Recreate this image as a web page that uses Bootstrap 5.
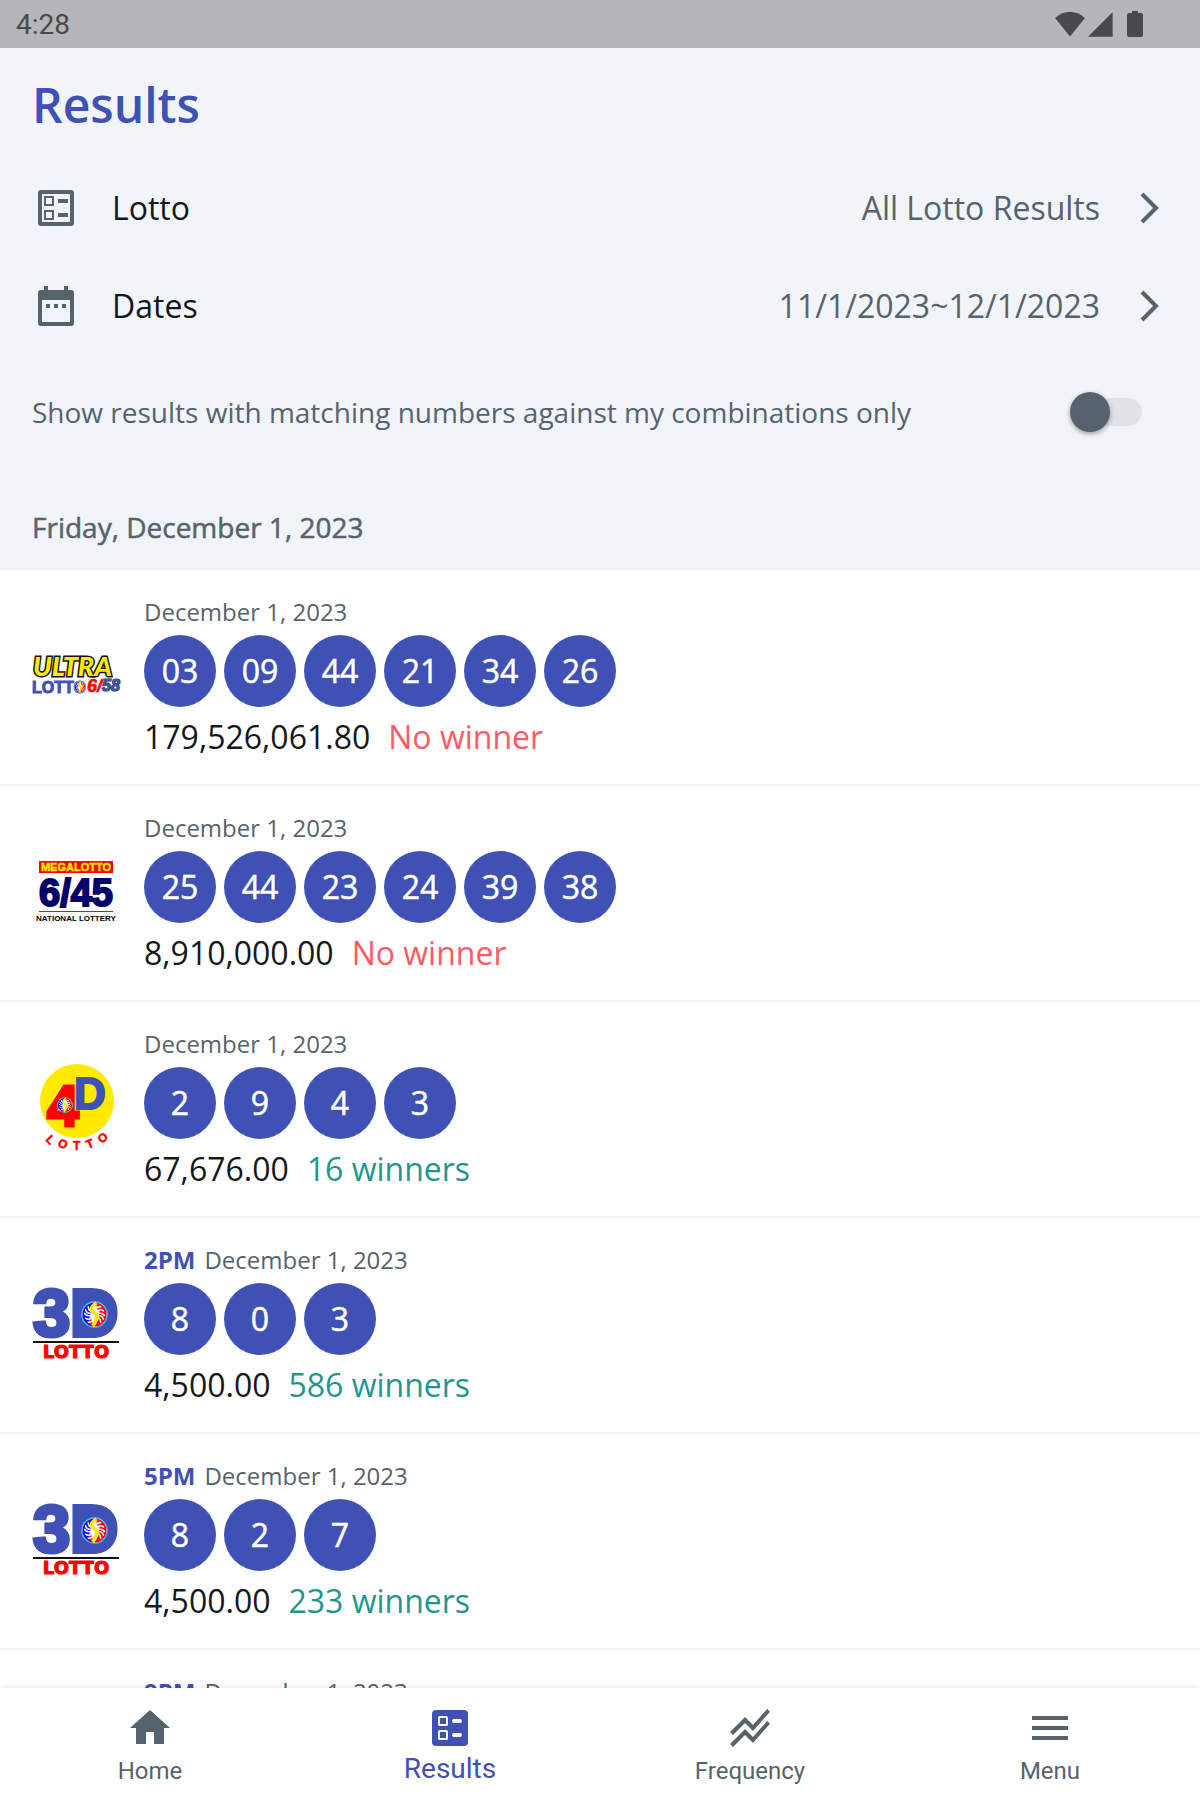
<!DOCTYPE html>
<html lang="en">
<head>
<meta charset="utf-8">
<meta name="viewport" content="width=device-width, initial-scale=1">
<title>Lotto Results</title>
<link href="https://cdn.jsdelivr.net/npm/bootstrap@5.3.0/dist/css/bootstrap.min.css" rel="stylesheet">
<style>
  :root { --ink: #14181b; --muted: #57636c; --brand: #3f51b5; --panel: #f1f4f8; --win: #249689; --lose: #ff5963; }
  body { font-family: "Open Sans", "Noto Sans", sans-serif; color: var(--ink); background: #fff; font-size: 32px; line-height: 48px; }
  .muted { color: var(--muted); }
  .brand { color: var(--brand); }
  .panel { background: var(--panel); }
  .status-bar { height: 48px; padding: 0 57px 0 16px; background: #b5b6ba; color: #48494a; font: 28px/50px Roboto, sans-serif; }
  .page-title { font-size: 48px; line-height: 64px; font-weight: 600; padding: 25px 32px 22px; }
  .filter-row { height: 98px; padding: 0 28px 0 32px; gap: 32px; color: var(--ink); font-size: 32px; line-height: 48px; }
  .filter-row svg { width: 48px; height: 48px; fill: var(--muted); }
  .filter-row .value { margin-right: -8px; }
  .match-row { height: 114px; padding: 0 58px 0 32px; font-size: 28px; line-height: 40px; }
  .toggle { appearance: none; width: 72px; height: 28px; margin: 0; border: 0; border-radius: 14px; background: #dfe2e6; position: relative; }
  .toggle::before { content: ""; position: absolute; left: 0; top: -6px; width: 40px; height: 40px; border-radius: 50%; background: var(--muted); box-shadow: 0 2px 5px rgba(0,0,0,.35); }
  .toggle:checked::before { left: 32px; background: var(--brand); }
  .day-heading { font-size: 28px; line-height: 40px; font-weight: 500; margin: 0; padding: 38px 32px 23px; -webkit-text-stroke: .5px currentColor; }
  .feed { min-height: 0; scrollbar-width: none; }
  .draw { padding: 24px 32px 23px; gap: 24px; border-bottom: 2px solid var(--panel); }
  .draw-logo { width: 88px; height: 88px; }
  .draw-date { font-size: 24px; line-height: 36px; gap: 9px; margin-bottom: 5px; }
  .ball { width: 72px; height: 72px; border-radius: 50%; background: var(--brand); color: #fff; font-weight: 500; -webkit-text-stroke: .5px currentColor; }
  .prize { gap: 18px; margin-top: 6px; }
  .win { color: var(--win); }
  .lose { color: var(--lose); }
  .tab-bar { height: 112px; background: #fff; box-shadow: 0 0 8px rgba(0,0,0,.12); font-family: Roboto, sans-serif; z-index: 2; }
  .tab-bar a { color: var(--muted); font-size: 24px; line-height: 32px; padding-top: 16px; gap: 3px; }
  .tab-bar a.current { color: var(--brand); font-size: 28px; gap: 1px; }
  .tab-bar svg { width: 48px; height: 48px; fill: currentColor; }
  .logo-sans { font-family: "Liberation Sans", sans-serif; font-weight: 700; }
  .logo-heavy { font-family: Lato, "Liberation Sans", sans-serif; font-weight: 900; }
  .logo-wide { font-family: "DejaVu Sans", sans-serif; font-weight: 700; }
</style>
<script src="https://cdn.jsdelivr.net/npm/bootstrap@5.3.0/dist/js/bootstrap.bundle.min.js"></script>
</head>
<body class="vh-100 d-flex flex-column overflow-hidden">

<svg width="0" height="0" class="position-absolute" aria-hidden="true">
  <symbol id="swirl" viewBox="-13 -13 26 26">
    <circle r="12.3" fill="#fff" stroke="#25b7e8" stroke-width="1.2"/>
    <path d="M0-11.6A11.6 11.6 0 0 0 0 11.6Q-7 8-4 1Q-2-4 0-11.6Z" fill="#0a10e8"/>
    <path d="M0-11.6A11.6 11.6 0 0 1 0 11.6Q2 5 4 0Q7-7 0-11.6Z" fill="#f40b0b"/>
    <path d="M-3 2Q-3 8 0 11.500H-2Q-8 8-3 2ZM3-2Q3-8 0-11.500H2Q8-8 3-2Z" fill="#f40b0b"/>
    <g fill="none" stroke="#fff" stroke-width="1.500" stroke-linecap="round">
      <path d="M-3-3Q-6-4-6-7.500M-3-1Q-8-1-8.500-4.500M-3 1Q-8 2-9.500-1M-2 3Q-6 6-8.500 3.500M0 4Q-3 8-6 7.500"/>
      <path d="M3 3Q6 4 6 7.500M3 1Q8 1 8.500 4.500M3-1Q8-2 9.500 1M2-3Q6-6 8.500-3.500M0-4Q3-8 6-7.500"/>
    </g>
    <path d="M2-11Q-5-7-2-3Q4 0 2 4Q1 8-2 11" fill="none" stroke="#ffe800" stroke-width="3.600"/>
  </symbol>
  <symbol id="logo-3d" viewBox="0 0 88 88">
    <g class="logo-sans" fill="#3f51b5" stroke="#3f51b5" stroke-width="4" font-size="67">
      <text x="1" y="54">3</text>
      <text x="38" y="54">D</text>
    </g>
    <rect x="47" y="12" width="33" height="40" rx="12" fill="#3f51b5"/>
    <use href="#swirl" x="49" y="19" width="27" height="27"/>
    <rect x="1" y="59" width="86" height="2" fill="#111"/>
    <text class="logo-wide" x="44" y="76" font-size="18" fill="red" stroke="red" stroke-width="1" text-anchor="middle">LOTTO</text>
  </symbol>
</svg>

<div class="status-bar d-flex justify-content-between flex-shrink-0">
  <span>4:28</span>
  <svg width="90" height="48" viewBox="0 0 90 48" fill="#48494a" aria-hidden="true">
    <path d="M2 18Q17 5.500 32 18L17 36.500Z"/>
    <path d="M35 36.700 59.600 12.300V36.700Z"/>
    <path d="M79 11h6v2h3q2 0 2 2v20q0 2-2 2H76q-2 0-2-2V15q0-2 2-2h3z"/>
  </svg>
</div>

<header class="panel flex-shrink-0">
  <h1 class="page-title brand m-0">Results</h1>
  <button type="button" class="filter-row btn border-0 rounded-0 w-100 d-flex align-items-center text-start">
    <svg viewBox="0 0 24 24" aria-hidden="true"><path fill-rule="evenodd" d="M4.500 3h15Q21 3 21 4.500v15q0 1.500-1.500 1.500h-15Q3 21 3 19.500v-15Q3 3 4.500 3zM5 5v14h14V5zM13 7.500h5v2h-5zM13 14.500h5v2h-5zM6 6h5v5H6zM7 7v3h3V7zM6 13h5v5H6zM7 14v3h3v-3z"/></svg>
    <span class="flex-grow-1">Lotto</span>
    <span class="value muted">All Lotto Results</span>
    <svg class="muted" viewBox="0 0 48 48" aria-hidden="true"><path d="M18 10 32 24 18 38" fill="none" stroke="currentColor" stroke-width="4"/></svg>
  </button>
  <button type="button" class="filter-row btn border-0 rounded-0 w-100 d-flex align-items-center text-start">
    <svg viewBox="0 0 24 24" aria-hidden="true"><path fill-rule="evenodd" d="M6 2h2v2h8V2h2v2h1.500Q21 4 21 5.500v15q0 1.500-1.500 1.500h-15Q3 22 3 20.500v-15Q3 4 4.500 4H6zM5 9v11h14V9zM7 11h2v2H7zM11 11h2v2h-2zM15 11h2v2h-2z"/></svg>
    <span class="flex-grow-1">Dates</span>
    <span class="value muted">11/1/2023~12/1/2023</span>
    <svg class="muted" viewBox="0 0 48 48" aria-hidden="true"><path d="M18 10 32 24 18 38" fill="none" stroke="currentColor" stroke-width="4"/></svg>
  </button>
  <div class="match-row muted d-flex align-items-center justify-content-between">
    <label for="matching">Show results with matching numbers against my combinations only</label>
    <input class="toggle flex-shrink-0" type="checkbox" role="switch" id="matching">
  </div>
  <h2 class="day-heading muted">Friday, December 1, 2023</h2>
</header>

<main class="feed flex-grow-1 overflow-auto">
  <ul class="list-unstyled m-0">
    <li class="draw d-flex align-items-center">
      <svg class="draw-logo overflow-visible" viewBox="0 0 88 88" role="img" aria-label="Ultra Lotto 6/58">
        <text class="logo-heavy" font-style="italic" x="1" y="42" font-size="27" fill="#ffea00" stroke="#111" stroke-width="3" paint-order="stroke">ULTRA</text>
        <text class="logo-sans" x="0" y="59" font-size="16" fill="#3f51b5" stroke="#3f51b5">LOTTO</text>
        <g class="logo-sans" font-style="italic">
          <text x="55" y="58" font-size="18" fill="red" stroke="red" stroke-width=".6">6/</text>
          <text x="70" y="57" font-size="16" fill="#3f51b5" stroke="#333" stroke-width="1.200" paint-order="stroke">58</text>
        </g>
        <use href="#swirl" x="42" y="47" width="12" height="12"/>
      </svg>
      <div class="draw-info">
        <div class="draw-date muted">December 1, 2023</div>
        <ol class="list-unstyled d-flex gap-2 m-0">
          <li class="ball d-flex align-items-center justify-content-center">03</li>
          <li class="ball d-flex align-items-center justify-content-center">09</li>
          <li class="ball d-flex align-items-center justify-content-center">44</li>
          <li class="ball d-flex align-items-center justify-content-center">21</li>
          <li class="ball d-flex align-items-center justify-content-center">34</li>
          <li class="ball d-flex align-items-center justify-content-center">26</li>
        </ol>
        <div class="prize d-flex"><span>179,526,061.80</span><span class="lose">No winner</span></div>
      </div>
    </li>
    <li class="draw d-flex align-items-center">
      <svg class="draw-logo overflow-visible" viewBox="0 0 88 88" role="img" aria-label="Megalotto 6/45">
        <rect x="7" y="11" width="74" height="12" fill="red"/>
        <text class="logo-sans" x="44" y="21" font-size="11" fill="#ffee00" stroke="#ffee00" stroke-width=".4" text-anchor="middle">MEGALOTTO</text>
        <text class="logo-sans" x="44" y="56" font-size="38" fill="#00006b" stroke="#00006b" stroke-width="2" text-anchor="middle">6/45</text>
        <rect x="7" y="61" width="74" height="1" fill="red"/>
        <text class="logo-sans" x="44" y="71" font-size="8" fill="#000" text-anchor="middle">NATIONAL LOTTERY</text>
      </svg>
      <div class="draw-info">
        <div class="draw-date muted">December 1, 2023</div>
        <ol class="list-unstyled d-flex gap-2 m-0">
          <li class="ball d-flex align-items-center justify-content-center">25</li>
          <li class="ball d-flex align-items-center justify-content-center">44</li>
          <li class="ball d-flex align-items-center justify-content-center">23</li>
          <li class="ball d-flex align-items-center justify-content-center">24</li>
          <li class="ball d-flex align-items-center justify-content-center">39</li>
          <li class="ball d-flex align-items-center justify-content-center">38</li>
        </ol>
        <div class="prize d-flex"><span>8,910,000.00</span><span class="lose">No winner</span></div>
      </div>
    </li>
    <li class="draw d-flex align-items-center">
      <svg class="draw-logo overflow-visible" viewBox="0 0 88 88" role="img" aria-label="4D Lotto">
        <circle cx="45" cy="35" r="37" fill="#ffea00"/>
        <text class="logo-sans" x="15" y="60" font-size="57" fill="red" stroke="red" stroke-width="3">4</text>
        <circle cx="33" cy="39" r="7" fill="red"/>
        <text class="logo-sans" x="42" y="43" font-size="44" fill="#3f51b5" stroke="#3f51b5" stroke-width="2">D</text>
        <use href="#swirl" x="25" y="31" width="16" height="16"/>
        <text class="logo-sans" font-size="12" fill="red" stroke="red" stroke-width=".5" x="13 25 41 56 70" y="74 80 84 83 78" rotate="45 22 0 -22 -42">LOTTO</text>
      </svg>
      <div class="draw-info">
        <div class="draw-date muted">December 1, 2023</div>
        <ol class="list-unstyled d-flex gap-2 m-0">
          <li class="ball d-flex align-items-center justify-content-center">2</li>
          <li class="ball d-flex align-items-center justify-content-center">9</li>
          <li class="ball d-flex align-items-center justify-content-center">4</li>
          <li class="ball d-flex align-items-center justify-content-center">3</li>
        </ol>
        <div class="prize d-flex"><span>67,676.00</span><span class="win">16 winners</span></div>
      </div>
    </li>
    <li class="draw d-flex align-items-center">
      <svg class="draw-logo" role="img" aria-label="3D Lotto"><use href="#logo-3d"/></svg>
      <div class="draw-info">
        <div class="draw-date muted d-flex"><strong class="brand">2PM</strong><span>December 1, 2023</span></div>
        <ol class="list-unstyled d-flex gap-2 m-0">
          <li class="ball d-flex align-items-center justify-content-center">8</li>
          <li class="ball d-flex align-items-center justify-content-center">0</li>
          <li class="ball d-flex align-items-center justify-content-center">3</li>
        </ol>
        <div class="prize d-flex"><span>4,500.00</span><span class="win">586 winners</span></div>
      </div>
    </li>
    <li class="draw d-flex align-items-center">
      <svg class="draw-logo" role="img" aria-label="3D Lotto"><use href="#logo-3d"/></svg>
      <div class="draw-info">
        <div class="draw-date muted d-flex"><strong class="brand">5PM</strong><span>December 1, 2023</span></div>
        <ol class="list-unstyled d-flex gap-2 m-0">
          <li class="ball d-flex align-items-center justify-content-center">8</li>
          <li class="ball d-flex align-items-center justify-content-center">2</li>
          <li class="ball d-flex align-items-center justify-content-center">7</li>
        </ol>
        <div class="prize d-flex"><span>4,500.00</span><span class="win">233 winners</span></div>
      </div>
    </li>
    <li class="draw d-flex">
      <div class="draw-logo"></div>
      <div class="draw-info">
        <div class="draw-date muted d-flex"><strong class="brand">9PM</strong><span>December 1, 2023</span></div>
      </div>
    </li>
  </ul>
</main>

<nav class="tab-bar row g-0 flex-shrink-0 position-relative" aria-label="Main">
  <a href="#" class="col d-flex flex-column align-items-center text-decoration-none">
    <svg viewBox="0 0 24 24" aria-hidden="true"><path d="M10 20v-6h4v6h5v-8h3L12 3 2 12h3v8z"/></svg>
    <span>Home</span>
  </a>
  <a href="#" class="current col d-flex flex-column align-items-center text-decoration-none" aria-current="page">
    <svg viewBox="0 0 24 24" aria-hidden="true"><rect x="3" y="3" width="18" height="18" rx="2"/><g fill="none" stroke="#fff"><rect x="6.500" y="6.500" width="4" height="4" rx=".3"/><rect x="6.500" y="13.500" width="4" height="4" rx=".3"/></g><g fill="#fff"><rect x="13" y="7.500" width="5" height="2" rx="1"/><rect x="13" y="14.500" width="5" height="2" rx="1"/></g></svg>
    <span>Results</span>
  </a>
  <a href="#" class="col d-flex flex-column align-items-center text-decoration-none">
    <svg viewBox="0 0 24 24" aria-hidden="true"><path d="M2 19.990l7.500-7.510 4 4 7.090-7.970L22 9.920l-8.500 9.560-4-4-6 6.010L2 19.990zm1.500-4.500l6-6.010 4 4L22 3.920l-1.410-1.410-7.090 7.970-4-4L2 13.990l1.500 1.500z"/></svg>
    <span>Frequency</span>
  </a>
  <a href="#" class="col d-flex flex-column align-items-center text-decoration-none">
    <svg viewBox="0 0 24 24" aria-hidden="true"><path d="M3 18h18v-2H3zM3 13h18v-2H3zM3 6v2h18V6z"/></svg>
    <span>Menu</span>
  </a>
</nav>
</body>
</html>
